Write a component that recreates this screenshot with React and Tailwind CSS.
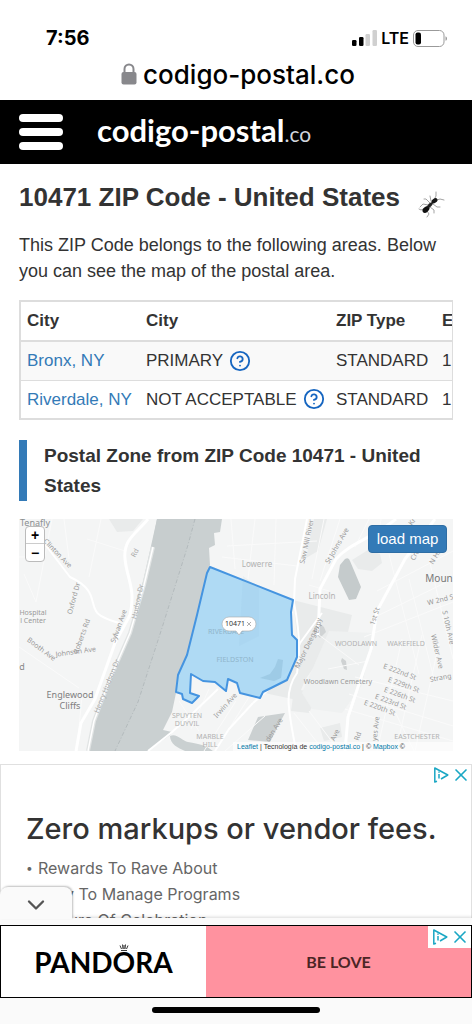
import { CircleHelp, ChevronDown, X } from 'lucide-react'

const rows = [
  { city: 'Bronx, NY', kind: 'PRIMARY', type: 'STANDARD', extra: '1' },
  { city: 'Riverdale, NY', kind: 'NOT ACCEPTABLE', type: 'STANDARD', extra: '1' }
]

const perks = ['Rewards To Rave About', 'Easy To Manage Programs', 'Culture Of Celebration']

// x, y, rotation, size, colour
const mapLabels = [
  { text: 'Tenafly', x: 16, y: 7, r: 0, size: 9, fill: '#8b8f90' },
  { text: 'Clinton Ave', x: 37, y: 36, r: 46, size: 7, fill: '#999' },
  { text: 'Oxford Dr', x: 57, y: 80, r: -75, size: 7, fill: '#999' },
  { text: 'Roberts Rd', x: 65, y: 118, r: -70, size: 7, fill: '#999' },
  { text: 'Sylvan Ave', x: 102, y: 108, r: -70, size: 7, fill: '#999' },
  { text: 'Hudson Dr', x: 121, y: 83, r: -78, size: 7, fill: '#aaa' },
  { text: 'Rd', x: 118, y: 35, r: -62, size: 7, fill: '#aaa' },
  { text: 'Hospital', x: 14, y: 96, r: 0, size: 7, fill: '#999' },
  { text: 'l Center', x: 14, y: 104, r: 0, size: 7, fill: '#999' },
  { text: 'Booth Ave', x: 21, y: 132, r: 37, size: 7, fill: '#999' },
  { text: 'Johnson Ave', x: 57, y: 135, r: -8, size: 7, fill: '#999' },
  { text: 'd', x: 3, y: 151, r: 0, size: 9, fill: '#888' },
  { text: 'Henry Hudson Dr', x: 90, y: 168, r: -68, size: 7, fill: '#aaa' },
  { text: 'Englewood', x: 51, y: 179, r: 0, size: 9, fill: '#7d7d7d' },
  { text: 'Cliffs', x: 51, y: 190, r: 0, size: 9, fill: '#7d7d7d' },
  { text: 'Saw Mill River', x: 290, y: 23, r: -78, size: 7, fill: '#999' },
  { text: 'St Johns Ave', x: 320, y: 28, r: -60, size: 7, fill: '#999' },
  { text: 'Lowerre', x: 238, y: 48, r: 0, size: 8, fill: '#b2b2b2' },
  { text: 'Lincoln', x: 303, y: 80, r: 0, size: 8, fill: '#b2b2b2' },
  { text: 'Expy', x: 301, y: 107, r: -78, size: 7, fill: '#999' },
  { text: '1st St', x: 358, y: 98, r: -72, size: 7, fill: '#999' },
  { text: 'Kr', x: 395, y: 4, r: -55, size: 7, fill: '#999' },
  { text: 'Cro', x: 398, y: 37, r: -60, size: 7, fill: '#999' },
  { text: 'N High', x: 420, y: 36, r: -58, size: 7, fill: '#999' },
  { text: 'Moun', x: 420, y: 63, r: 0, size: 10, fill: '#777' },
  { text: 'W 2nd S', x: 422, y: 83, r: -14, size: 7, fill: '#999' },
  { text: 'S 10th Ave', x: 427, y: 109, r: 77, size: 7, fill: '#999' },
  { text: 'Major Deegan', x: 290, y: 129, r: -64, size: 7, fill: '#999' },
  { text: 'WOODLAWN', x: 337, y: 127, r: 0, size: 7, fill: '#b2b2b2' },
  { text: 'WAKEFIELD', x: 387, y: 127, r: 0, size: 7, fill: '#b2b2b2' },
  { text: 'Wilder Ave', x: 416, y: 133, r: 77, size: 7, fill: '#999' },
  { text: 'Woodlawn Cemetery', x: 319, y: 165, r: 0, size: 7, fill: '#999' },
  { text: 'Strang', x: 422, y: 161, r: -10, size: 7, fill: '#999' },
  { text: 'E 222nd St', x: 380, y: 155, r: 20, size: 7, fill: '#999' },
  { text: 'E 229th St', x: 384, y: 168, r: 20, size: 7, fill: '#999' },
  { text: 'E 226th St', x: 380, y: 178, r: 20, size: 7, fill: '#999' },
  { text: 'E 223rd St', x: 371, y: 185, r: 20, size: 7, fill: '#999' },
  { text: 'E 220th St', x: 360, y: 191, r: 20, size: 7, fill: '#999' },
  { text: 'EASTCHESTER', x: 398, y: 220, r: 0, size: 7, fill: '#b2b2b2' },
  { text: 'RIVERDALE', x: 207, y: 115, r: 0, size: 7, fill: '#8fb5cb' },
  { text: 'FIELDSTON', x: 216, y: 143, r: 0, size: 7, fill: '#8fb5cb' },
  { text: 'Irwin Ave', x: 208, y: 188, r: -48, size: 7, fill: '#999' },
  { text: 'SPUYTEN', x: 168, y: 199, r: 0, size: 7, fill: '#b2b2b2' },
  { text: 'DUYVIL', x: 168, y: 207, r: 0, size: 7, fill: '#b2b2b2' },
  { text: 'MARBLE', x: 191, y: 220, r: 0, size: 7, fill: '#b2b2b2' },
  { text: 'HILL', x: 191, y: 228, r: 0, size: 7, fill: '#b2b2b2' },
  { text: 'den Ave', x: 257, y: 212, r: -58, size: 7, fill: '#999' },
  { text: 'Ave', x: 318, y: 217, r: -64, size: 7, fill: '#999' },
  { text: 'Rd', x: 341, y: 218, r: -70, size: 7, fill: '#999' },
  { text: 'yes Ave', x: 359, y: 210, r: -84, size: 7, fill: '#999' }
]

const Signal = () => (
  <svg viewBox="0 0 25 16" className="w-[25px] h-4" aria-hidden="true">
    <rect x="0" y="10" width="4.500" height="6" rx="1.200" />
    <rect x="7" y="7" width="4.500" height="9" rx="1.200" />
    <rect x="13.500" y="4" width="4.500" height="12" rx="1.200" fill="#d0d0d0" />
    <rect x="20.500" y="0" width="4.500" height="16" rx="1.200" fill="#d0d0d0" />
  </svg>
)

const Battery = () => (
  <svg viewBox="0 0 35 17" className="w-[35px] h-[17px]" aria-hidden="true">
    <rect x="0.500" y="0.500" width="30.500" height="16" rx="4.500" fill="none" stroke="#9a9a9a" />
    <rect x="2.500" y="2.500" width="5.500" height="12" rx="2" />
    <path d="M32.500 6.200c2 .8 2 3.800 0 4.600z" fill="#9a9a9a" />
  </svg>
)

const Ant = () => (
  <svg viewBox="0 0 28 28" className="w-7 h-7" aria-hidden="true">
    <g fill="none" stroke="#a3a3a3" strokeWidth="1" strokeLinecap="round">
      <path d="M17 10l2-4 0-4M20 10l3-1 4 1M13 13l-4-4-2 0M11 15l-5-1-3 3M9 18l-5 2-2-1" />
      <path d="M16 14l4 3 3 0M13 17l4 3 0 3M10 21l2 3-2 3M14 11l-1-5" />
    </g>
    <ellipse cx="9" cy="19.500" rx="4" ry="2.600" transform="rotate(-42 9 19.500)" fill="#111" />
    <ellipse cx="13" cy="15" rx="3.500" ry="1.700" transform="rotate(-45 13 15)" fill="#222" />
    <ellipse cx="17.500" cy="10.800" rx="3.300" ry="2.100" transform="rotate(-35 17.500 10.800)" fill="#161616" />
  </svg>
)

const AdChoices = () => (
  <svg viewBox="0 0 16 16" className="w-4 h-4" fill="none" stroke="#1aa7c4" aria-hidden="true">
    <path d="M4 14.200L1.800 15V1L14.800 8 8 12" strokeWidth="1.500" strokeLinejoin="round" />
    <path d="M6 7v4.600M6 4.400v1.400" strokeWidth="1.500" />
  </svg>
)

const AdControls = () => (
  <div className="flex items-center">
    <a href="#adchoices" aria-label="AdChoices"><AdChoices /></a>
    <button type="button" aria-label="Close ad" className="ml-[2px]">
      <X className="w-5 h-5 text-[#1aa7c4]" strokeWidth={2} />
    </button>
  </div>
)

const MapDrawing = () => (
  <svg
    viewBox="0 0 434 232"
    preserveAspectRatio="xMidYMid slice"
    className="block w-full h-[232px]"
    role="img"
    aria-label="Map of ZIP Code 10471"
  >
    <rect width="434" height="232" fill="#f4f5f5" />

    {/* parks */}
    <g fill="#e9ebeb">
      <path d="M90 0h34l-10 12-16 1z" />
      <path d="M295 0h13l-9 32-12 7z" />
      <path d="M333 41l16-10 12 4 2 9-10 8-14-2z" />
      <path d="M274 81l59 15-4 17-22 18-21 30-8 20-28-6-6-2 26-14 10-25z" />
      <path d="M275 170l25 4-10 20-18-2z" />
      <path d="M310 112l45 2-12 52-20 28-30-4-10-16z" fill="#eff1f1" />
      <path d="M301 209l20-5 2 14-18 4z" />
    </g>

    {/* water */}
    <path
      d="M138 0H203L201 13 195 14 196 26 190 29 191 46 188 56 178 96 173 116 168 136 159 156 157 174 153 193 144 211 153 213 151 216 129 232H68L74 203 79 189 96 149 111 116 119 76 124 63 133 26z"
      fill="#cad0d1"
    />
    <path d="M176 0L169 26 143 109 119 183 96 232H68L74 203 96 149 111 116 124 63 138 0z" fill="#c7cdce" />
    <path d="M151 217c7-3 12 5 18 6 12 2 17 3 25 9h-28c-7-3-15-7-15-15z" fill="#cad0d1" />
    <path d="M326 40q4-2 5 2l11 26-5 12-7 1-11-23 2-12z" fill="#c5cbcc" />
    <path d="M239 198l27-4-7 13-8 16-22-2z" fill="#cbd0d1" />
    <path d="M323 139l4 3 1 9-3-1-3-8z" fill="#cfd2d3" />
    <path d="M301 105l4 3 2 5-6 6-3-3z" fill="#d0d3d4" />
    <path d="M176 0L169 26 143 109 119 183 96 232" fill="none" stroke="#adb5b8" strokeWidth="0.800" strokeDasharray="4 2 1 2" />

    {/* minor streets */}
    <g fill="none" stroke="#fafafa" strokeWidth="1">
      <path d="M0 38l16 0 9-14M5 55l12 28L33 0M0 128l60 41M58 232l5-56M45 0l5 40M68 20l38 12M82 0l-12 58" />
      <path d="M212 0l4 50M236 0l-7 60M257 0l-2 66M208 27l90-5M203 38l75 9M290 66l20 6M350 0l-14 28M362 0l-4 30" />
      <path d="M345 118l89-35M352 100l82-40M358 72l76-40M336 158l98 24M330 175l104 32M326 190l108 32M383 120l-25 112M403 116l-26 116M420 125l-24 107" />
      <path d="M370 35l30 120M390 60l25 100M410 40l24 100M217 182l-32 50M230 178l-34 54M160 182l20 30M190 170l-18 40M206 232l40-35" />
      <path d="M275 194l30 38M290 192l30 40M300 116l40 30M309 150l40-8M365 170l30 62M305 0l-12 60M321 0l-20 62" />
    </g>
    {/* shore road */}
    <path d="M134 28l-9 38-14 48-20 46-16 42-6 30" fill="none" stroke="#e1e4e4" strokeWidth="4" />
    <path d="M134 28l-9 38-14 48-20 46-16 42-6 30" fill="none" stroke="#fff" strokeWidth="1.500" />

    {/* highways */}
    <g fill="none" stroke="#fff" strokeWidth="3" strokeLinejoin="round">
      <path d="M129 0C118 14 104 20 106 40s11 30 5 56L96 124 76 180 62 204l-5 28" />
      <path d="M25 24l26 34c26 12 20 24 26 34 3 6 16 10 23 12" strokeWidth="2" />
      <path d="M299 116l2-46 16-30c14-16 35-20 60-40" />
      <path d="M288 0l-12 60-1 24c4 20 8 45 3 70-14 20-8 38-1 78" strokeWidth="2" />
      <path d="M416 0l-30 40-28 52-6 38-11 32-12 36-3 34" />
      <path d="M234 184l-24 26-14 22M129 232l24-19 20-18 26-25" strokeWidth="2" />
      <path d="M234 184l37-32 10-28 22-30" strokeWidth="2" />
    </g>

    {/* zip code area */}
    <path
      d="M191 48L274 81 272 93 273 116 278 121 278 138 268 161 244 173 241 179 221 174 218 164 209 160 207 172 196 163 184 162 172 155 171 174 180 177 173 184 164 180 163 175 157 173 159 156 168 136 173 116 178 96 188 54z"
      fill="#9dd3f4"
      fillOpacity="0.800"
      stroke="#4594e0"
      strokeWidth="2"
      strokeLinejoin="round"
    />
    <path d="M264 141l-2 18-7 3-14-3 10-4 5-7 3-8z" fill="#8dbbd7" fillOpacity="0.500" />
    <path d="M224 57l16 12 0 48-20 10z" fill="#8dbbd7" fillOpacity="0.100" />

    <g fontFamily="'Noto Sans', sans-serif" textAnchor="middle">
      {mapLabels.map((l, i) => (
        <text key={i} transform={`translate(${l.x} ${l.y}) rotate(${l.r})`} fontSize={l.size} fill={l.fill}>
          {l.text}
        </text>
      ))}
    </g>

    {/* popup */}
    <path d="M210 98h20a7 7 0 0 1 0 14h-7l-3 4-3-4h-7a7 7 0 0 1 0-14z" fill="#fff" stroke="#aaa" strokeWidth="0.600" />
    <text x="216" y="107" fontFamily="'Noto Sans', sans-serif" fontSize="7" textAnchor="middle" fill="#333">10471</text>
    <path d="M228 103l4 4m0-4l-4 4" stroke="#999" strokeWidth="0.800" />
  </svg>
)

const App = () => {
  return (
    <div className="h-screen flex flex-col overflow-hidden bg-white text-[#333] font-['Liberation_Sans',Arial,sans-serif]">
      {/* Browser chrome */}
      <div className="shrink-0 h-[100px] pt-6 text-black font-[Inter,sans-serif]">
        <div className="flex items-center justify-between h-7 pl-[46px] pr-6">
          <span className="text-xl font-bold">7:56</span>
          <div className="flex items-center gap-1">
            <Signal />
            <span className="text-base font-semibold">LTE</span>
            <Battery />
          </div>
        </div>
        <div className="flex items-center justify-center h-11 gap-[6px] pl-1">
          <svg viewBox="0 0 16 22" className="w-4 h-[22px]" aria-hidden="true">
            <path d="M3.500 10V6a4.500 4.500 0 0 1 9 0v4" fill="none" stroke="#88888c" strokeWidth="2" />
            <rect x="0.500" y="9" width="15" height="12.500" rx="2" fill="#88888c" />
          </svg>
          <span className="text-[26px] font-medium">codigo-postal.co</span>
        </div>
      </div>

      <header className="shrink-0 flex items-center h-16 px-[19px] bg-black text-white">
        <button type="button" aria-label="Menu" className="flex flex-col gap-[6px] w-11">
          <span className="h-2 rounded-full bg-white" />
          <span className="h-2 rounded-full bg-white" />
          <span className="h-2 rounded-full bg-white" />
        </button>
        <a href="#home" className="ml-[34px] text-[31px] leading-9 font-bold font-[Lato,sans-serif]">
          codigo-postal<span className="text-[21px] font-normal text-gray-300">.co</span>
        </a>
      </header>

      <main className="flex-1 min-h-0 overflow-hidden">
        <div className="px-[19px] pt-[17px]">
          <div className="flex items-start justify-between">
            <h1 className="text-[26px] leading-8 font-bold whitespace-nowrap">10471 ZIP Code - United States</h1>
            <button type="button" aria-label="Report a bug" className="mt-[9px] mr-2"><Ant /></button>
          </div>
          <p className="mt-[14px] text-lg leading-[26px]">
            This ZIP Code belongs to the following areas. Below you can see the map of the postal area.
          </p>

          {/* Areas */}
          <div className="mt-4 overflow-hidden border-r border-[#ddd]">
            <table className="w-[520px] table-fixed border-2 border-[#ddd] text-[17px] text-left whitespace-nowrap">
              <colgroup>
                <col className="w-[120px]" />
                <col className="w-[190px]" />
                <col className="w-[106px]" />
                <col />
              </colgroup>
              <thead>
                <tr className="h-10 border-b-2 border-[#ddd]">
                  <th className="pl-[6px]">City</th>
                  <th className="pl-[6px]">City</th>
                  <th className="pl-[6px]">ZIP Type</th>
                  <th className="pl-[6px]">E</th>
                </tr>
              </thead>
              <tbody>
                {rows.map(row => (
                  <tr key={row.city} className="h-[39px] border-b border-[#ddd] odd:bg-[#f9f9f9]">
                    <td className="pl-[6px]"><a href="#city" className="text-[#337ab7]">{row.city}</a></td>
                    <td className="pl-[6px]">
                      <span className="flex items-center gap-[6px]">
                        {row.kind}
                        <button type="button" aria-label="Help">
                          <CircleHelp className="block w-[22px] h-[22px] text-[#1565c0]" />
                        </button>
                      </span>
                    </td>
                    <td className="pl-[6px]">{row.type}</td>
                    <td className="pl-[6px]">{row.extra}</td>
                  </tr>
                ))}
              </tbody>
            </table>
          </div>

          <h2 className="mt-5 border-l-8 border-[#337ab7] pl-[17px] pt-px text-[19px] leading-[30px] font-bold">
            Postal Zone from ZIP Code 10471 - United States
          </h2>

          {/* Map */}
          <div className="relative mt-[18px] overflow-hidden">
            <MapDrawing />
            <div className="absolute left-[6px] top-[7px] w-5 border border-[#bbb] rounded-sm bg-white text-black">
              <button type="button" aria-label="Zoom in" className="block w-full h-[17px] text-sm leading-4 font-bold border-b border-[#ccc]">+</button>
              <button type="button" aria-label="Zoom out" className="block w-full h-[17px] text-sm leading-4 font-bold">−</button>
            </div>
            <button type="button" className="absolute right-[6px] top-[6px] w-[79px] h-7 rounded border border-[#2e6da4] bg-[#337ab7] text-white text-[15px] leading-6">
              load map
            </button>
            <div className="absolute right-0 bottom-0 pl-1 pr-12 bg-white/60 text-[7px] leading-[9px] whitespace-nowrap">
              <a href="#leaflet" className="text-[#0078a8]">Leaflet</a> | Tecnología de <a href="#site" className="text-[#0078a8]">codigo-postal.co</a> | © <a href="#mapbox" className="text-[#0078a8]">Mapbox</a> ©
            </div>
          </div>
        </div>

        {/* Inline ad */}
        <section className="relative mt-[13px] h-80 border border-[#e0e0e0] px-[25px] pt-[44px] font-[Inter,sans-serif]">
          <div className="absolute right-0 top-0"><AdControls /></div>
          <h3 className="text-[29px] leading-10 font-medium whitespace-nowrap">Zero markups or vendor fees.</h3>
          <ul className="mt-[6px] text-base leading-[26px] text-[#666]">
            {perks.map(perk => (
              <li key={perk} className="flex gap-[6px]"><span className="w-[6px] text-xs leading-[26px]">•</span>{perk}</li>
            ))}
          </ul>
        </section>
      </main>

      {/* Anchored banner */}
      <footer className="relative shrink-0 h-[106px] pt-[7px] bg-[#fafafa] shadow-[0_-1px_3px_rgba(0,0,0,0.15)]">
        <button type="button" aria-label="Collapse ad" className="absolute left-0 -top-[31px] w-[72px] h-8 rounded-t-lg bg-[#fafafa] shadow-[1px_-1px_2px_rgba(0,0,0,0.25)] flex items-center justify-center">
          <ChevronDown className="w-7 h-7 mt-1 text-[#555]" strokeWidth={2} />
        </button>
        <div className="relative flex h-[73px] border border-black">
          <div className="w-[205px] bg-white flex items-center justify-center text-black">
            <span className="relative text-[28px] leading-9 font-bold font-[Lato,sans-serif]">
              PANDORA
              <svg viewBox="0 0 10 7" className="absolute left-[85px] top-0 w-[10px] h-[7px]" fill="none" stroke="#222" aria-hidden="true">
                <path d="M2 6.500h6M2.500 5L1 1.500M4 5L3.500 .5M6 5L6.500 .5M7.500 5L9 1.500M5 5V1" strokeWidth="0.900" />
              </svg>
            </span>
          </div>
          <a href="#offer" className="flex-1 bg-[#ff929f] flex items-center justify-center text-[#4b2525] text-base font-bold font-[Lato,sans-serif]">
            BE LOVE
          </a>
          <div className="absolute right-0 top-0 bg-white p-px pl-1"><AdControls /></div>
        </div>
        <div className="mx-auto mt-[9px] w-[168px] h-[6px] rounded-full bg-black" />
      </footer>
    </div>
  )
}

export default App
